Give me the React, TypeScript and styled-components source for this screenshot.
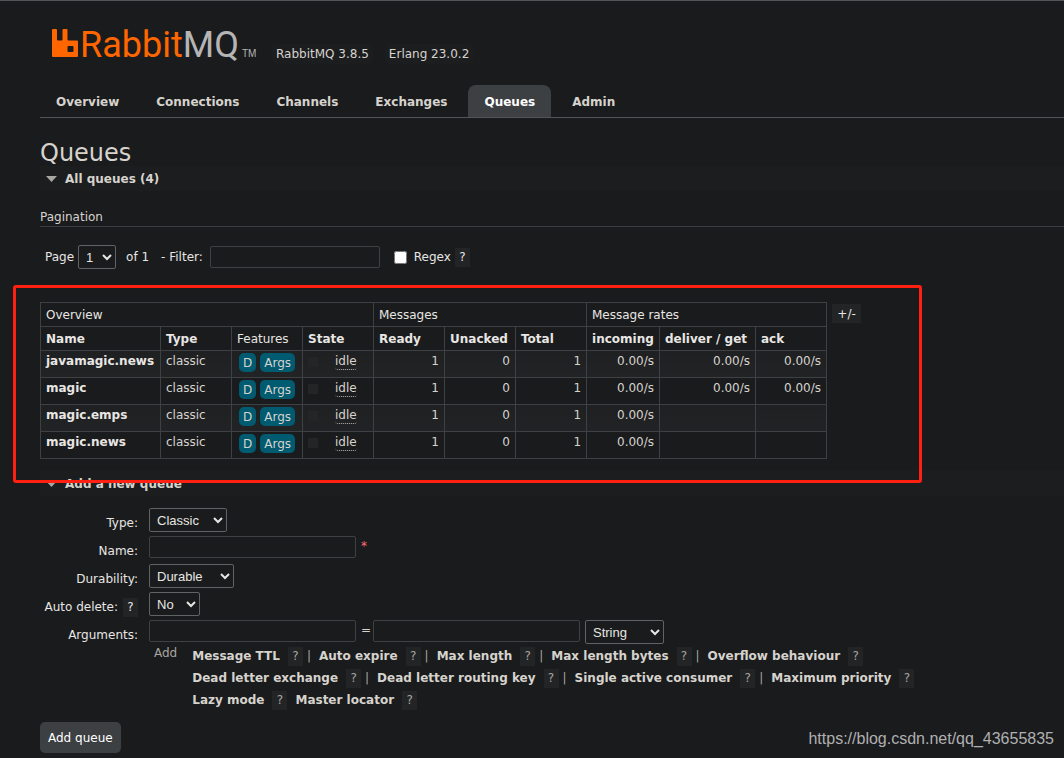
import React from "react";
import styled, { createGlobalStyle } from "styled-components";

const Global = createGlobalStyle`
  * { box-sizing: border-box; }
  body {
    margin: 0;
    background: #1a1b1d;
    color: #d6d3cd;
    font-family: "DejaVu Sans", Verdana, sans-serif;
    font-size: 12px;
    line-height: 16px;
  }
  a { color: inherit; text-decoration: none; }
`;

const Page = styled.div`
  position: relative;
  min-height: 100vh;
  padding: 26px 0 5px 40px;
  border-top: 1px solid #515558;
`;

const Header = styled.header`
  display: flex;
  align-items: center;
  height: 44px;
  gap: 12px;
`;

const Logo = styled.svg`
  display: block;
  width: 220px;
  height: 44px;
  overflow: visible;
`;

const Versions = styled.ul`
  display: flex;
  gap: 12px;
  margin: 10px 0 0;
  padding: 0;
  list-style: none;
`;

const Version = styled.li`
  padding: 2px 4px;
  border-radius: 4px;
  background: #1c1d1f;
`;

const Tabs = styled.nav`
  display: flex;
  gap: 5px;
  margin-top: 14px;
  border-bottom: 1px solid #515558;
`;

const Tab = styled.a<{ $active?: boolean }>`
  padding: 9px 16px 7px;
  border-radius: 8px 8px 0 0;
  font-weight: bold;
  background: ${(p) => (p.$active ? "#3c4043" : "transparent")};
  && { color: ${(p) => (p.$active ? "#ffffff" : "#d6d3cd")}; }
`;

const Title = styled.h1`
  margin: 22px 0 0;
  font-size: 24px;
  font-weight: normal;
  line-height: 26px;
`;

const SectionTitle = styled.h2`
  display: flex;
  align-items: center;
  gap: 8px;
  height: 25px;
  margin: 0;
  padding-left: 6px;
  background: #1c1d1f;
  font-size: 12px;
  font-weight: bold;
`;

const Arrow = styled.svg`
  width: 11px;
  height: 6px;
  fill: #a8a7a4;
`;

const SubTitle = styled.h3`
  margin: 18px 0;
  padding-bottom: 1px;
  border-bottom: 1px solid #3a3d3f;
  font-size: 12px;
  font-weight: normal;
`;

const FilterBar = styled.form`
  display: flex;
  align-items: center;
  gap: 4px;
  height: 24px;
  padding-left: 5px;
  color: #e8e6e3;
`;

const PageCount = styled.span`
  padding: 0 8px 0 6px;
`;

const FilterLabel = styled.label`
  padding-right: 3px;
`;

const RegexLabel = styled.label`
  display: flex;
  align-items: center;
  gap: 7px;
  margin-left: 10px;
`;

const Check = styled.input`
  width: 13px;
  height: 13px;
  margin: 0;
`;

const TextBox = styled.input<{ $width: number }>`
  width: ${(p) => p.$width}px;
  height: 22px;
  border: 1px solid #3d4144;
  border-radius: 2px;
  background: transparent;
  color: #e8e6e3;
  font: inherit;
`;

const Select = styled.select<{ $width: number }>`
  width: ${(p) => p.$width}px;
  height: 24px;
  padding: 0 3px;
  border: 1px solid #5f6366;
  border-radius: 2px;
  background: #1a1b1d;
  color: #e8e6e3;
  font-family: "Liberation Sans", Arial, sans-serif;
  font-size: 13px;
`;

const Help = styled.button`
  min-width: 15px;
  height: 19px;
  padding: 0 4px;
  border: 0;
  background: #222426;
  color: inherit;
  font: inherit;
`;

const TableRow = styled.div`
  display: flex;
  align-items: flex-start;
  gap: 5px;
  margin: 33px 0 12px;
`;

const ColumnToggle = styled(Help)`
  min-width: 29px;
  margin-top: 2px;
  color: #e8e6e3;
`;

const QueueTable = styled.table`
  width: 787px;
  table-layout: fixed;
  border-collapse: collapse;
`;

const Head = styled.th<{ $plain?: boolean }>`
  height: 24px;
  padding: 0 5px;
  border: 1px solid #3d4144;
  color: #e8e6e3;
  font-weight: ${(p) => (p.$plain ? "normal" : "bold")};
  text-align: left;
  white-space: nowrap;
`;

const Row = styled.tr`
  background: #1a1b1d;
  &:nth-child(odd) { background: linear-gradient(#1f2022, #222325); }
`;

const Cell = styled.td<{ $number?: boolean }>`
  height: 27px;
  padding: 2px 5px 0;
  border: 1px solid #3d4144;
  text-align: ${(p) => (p.$number ? "right" : "left")};
  vertical-align: top;
  white-space: nowrap;
`;

const QueueLink = styled.a`
  font-weight: bold;
  && { color: #e8e6e3; }
`;

const Features = styled.div`
  display: flex;
  gap: 4px;
  padding-left: 2px;
`;

const Feature = styled.abbr`
  padding: 2px 4px 1px;
  border-radius: 5px;
  background: #005a70;
`;

const State = styled.div`
  display: flex;
  align-items: center;
  gap: 17px;
`;

const StateMark = styled.span`
  width: 10px;
  height: 10px;
  background: #242527;
`;

const StateText = styled.abbr`
  border-bottom: 1px dotted #b8b5b0;
  border-radius: 3px;
  text-decoration: none;
`;

const Highlight = styled.div`
  position: absolute;
  left: 13px;
  top: 284px;
  width: 909px;
  height: 198px;
  border: 3px solid #ff2012;
  border-radius: 3px;
  pointer-events: none;
`;

const QueueForm = styled.form`
  display: grid;
  grid-template-columns: 98px 1fr;
  column-gap: 11px;
  margin-top: 12px;
`;

const FieldLabel = styled.div`
  display: flex;
  justify-content: flex-end;
  align-items: center;
  gap: 5px;
  height: 28px;
  padding-top: 2px;
  color: #e8e6e3;
  white-space: nowrap;
`;

const Field = styled.div`
  display: flex;
  align-items: flex-start;
  gap: 5px;
  height: 28px;
`;

const Mark = styled.span<{ $required?: boolean }>`
  width: 7px;
  padding-top: 2px;
  color: ${(p) => (p.$required ? "#ff7070" : "inherit")};
`;

const Shortcuts = styled.div`
  display: flex;
  grid-column: 2;
  gap: 15px;
  margin-top: -3px;
  padding-left: 5px;
  color: #a8a5a0;
`;

const ShortcutRow = styled.div`
  display: flex;
  align-items: center;
  height: 22px;
  white-space: nowrap;
`;

const Shortcut = styled.span`
  display: flex;
  align-items: center;
  gap: 8px;
  margin-right: 8px;
`;

const ShortcutLink = styled.a`
  font-weight: bold;
  && { color: #d6d3cd; }
`;

const Divider = styled.span`
  margin-left: -4px;
`;

const Submit = styled.button`
  display: block;
  height: 31px;
  margin-top: 11px;
  padding: 0 8px;
  border: 0;
  border-radius: 5px;
  background: #3c4043;
  color: #ffffff;
  font: inherit;
`;

const Watermark = styled.div`
  position: absolute;
  right: 10px;
  bottom: 10px;
  color: #b0b0b1;
  font-family: "Liberation Sans", Arial, sans-serif;
  font-size: 16px;
  line-height: 18px;
`;

const tabs = ["Overview", "Connections", "Channels", "Exchanges", "Queues", "Admin"];
const columns = [120, 71, 71, 71, 71, 71, 71, 73, 96, 71];
const headings = ["Name", "Type", "Features", "State", "Ready", "Unacked", "Total", "incoming", "deliver / get", "ack"];
const queues = [
  { name: "javamagic.news", rates: ["0.00/s", "0.00/s", "0.00/s"] },
  { name: "magic", rates: ["0.00/s", "0.00/s", "0.00/s"] },
  { name: "magic.emps", rates: ["0.00/s", "", ""] },
  { name: "magic.news", rates: ["0.00/s", "", ""] },
];
const shortcuts = [
  ["Message TTL", "Auto expire", "Max length", "Max length bytes", "Overflow behaviour"],
  ["Dead letter exchange", "Dead letter routing key", "Single active consumer", "Maximum priority"],
  ["Lazy mode", "Master locator"],
];

const DownArrow = () => (
  <Arrow viewBox="0 0 22 12" aria-hidden="true">
    <path d="M0 0h22L11 12z" />
  </Arrow>
);

const HelpButton = () => <Help type="button">?</Help>;

export default function App() {
  return (
    <>
      <Global />
      <Page>
        <Header>
          <Logo viewBox="0 0 220 44" role="img" aria-label="RabbitMQ">
            <path
              fill="#ff6600"
              fillRule="evenodd"
              d="M13 2h3q1 0 1 1v9.500q0 1 1 1h3.500q1 0 1-1V3q0-1 1-1h3q1 0 1 1v9.500q0 1 1 1h8.500q1 0 1 1V29q0 1-1 1H13q-1 0-1-1V3q0-1 1-1zM28.500 19q-1 0-1 1v4q0 1 1 1h4q1 0 1-1v-4q0-1-1-1z"
            />
            <text x="40" y="30" fill="#ff6600" fontFamily="Roboto, sans-serif" fontSize="36">
              Rabbit<tspan fill="#b5b5b5">MQ</tspan>
            </text>
            <text x="202" y="30" fill="#b5b5b5" fontFamily="Liberation Sans, sans-serif" fontSize="10">TM</text>
          </Logo>
          <Versions>
            <Version>RabbitMQ 3.8.5</Version>
            <Version>Erlang 23.0.2</Version>
          </Versions>
        </Header>
        <Tabs>
          {tabs.map((t) => (
            <Tab key={t} href="#" $active={t === "Queues"}>{t}</Tab>
          ))}
        </Tabs>
        <main>
          <Title>Queues</Title>
          <SectionTitle><DownArrow />All queues (4)</SectionTitle>
          <SubTitle>Pagination</SubTitle>
          <FilterBar>
            <label htmlFor="page">Page</label>
            <Select id="page" $width={38}><option>1</option></Select>
            <PageCount>of 1</PageCount>
            <FilterLabel htmlFor="filter">- Filter:</FilterLabel>
            <TextBox id="filter" $width={170} />
            <RegexLabel><Check type="checkbox" />Regex</RegexLabel>
            <HelpButton />
          </FilterBar>
          <TableRow>
            <QueueTable>
              <colgroup>
                {columns.map((w, i) => <col key={i} width={w} />)}
              </colgroup>
              <thead>
                <tr>
                  <Head $plain colSpan={4}>Overview</Head>
                  <Head $plain colSpan={3}>Messages</Head>
                  <Head $plain colSpan={3}>Message rates</Head>
                </tr>
                <tr>
                  {headings.map((h) => <Head key={h} $plain={h === "Features"}>{h}</Head>)}
                </tr>
              </thead>
              <tbody>
                {queues.map((q) => (
                  <Row key={q.name}>
                    <Cell><QueueLink href="#">{q.name}</QueueLink></Cell>
                    <Cell>classic</Cell>
                    <Cell><Features><Feature>D</Feature><Feature>Args</Feature></Features></Cell>
                    <Cell><State><StateMark /><StateText>idle</StateText></State></Cell>
                    <Cell $number>1</Cell>
                    <Cell $number>0</Cell>
                    <Cell $number>1</Cell>
                    {q.rates.map((r, i) => <Cell key={i} $number>{r}</Cell>)}
                  </Row>
                ))}
              </tbody>
            </QueueTable>
            <ColumnToggle type="button">+/-</ColumnToggle>
          </TableRow>
          <SectionTitle><DownArrow />Add a new queue</SectionTitle>
          <QueueForm id="add-queue">
            <FieldLabel><label htmlFor="type">Type:</label></FieldLabel>
            <Field><Select id="type" $width={78}><option>Classic</option></Select></Field>
            <FieldLabel><label htmlFor="name">Name:</label></FieldLabel>
            <Field><TextBox id="name" $width={207} /><Mark $required>*</Mark></Field>
            <FieldLabel><label htmlFor="durability">Durability:</label></FieldLabel>
            <Field><Select id="durability" $width={85}><option>Durable</option></Select></Field>
            <FieldLabel><label htmlFor="auto-delete">Auto delete:</label><HelpButton /></FieldLabel>
            <Field><Select id="auto-delete" $width={51}><option>No</option></Select></Field>
            <FieldLabel><label htmlFor="argument">Arguments:</label></FieldLabel>
            <Field>
              <TextBox id="argument" $width={207} />
              <Mark>=</Mark>
              <TextBox aria-label="Argument value" $width={207} />
              <Select aria-label="Argument type" $width={79}><option>String</option></Select>
            </Field>
            <Shortcuts>
              <span>Add</span>
              <div>
                {shortcuts.map((row, r) => (
                  <ShortcutRow key={r}>
                    {row.map((s, i) => (
                      <Shortcut key={s}>
                        <ShortcutLink href="#">{s}</ShortcutLink>
                        <HelpButton />
                        {r < 2 && i < row.length - 1 && <Divider>|</Divider>}
                      </Shortcut>
                    ))}
                  </ShortcutRow>
                ))}
              </div>
            </Shortcuts>
          </QueueForm>
          <Submit type="submit" form="add-queue">Add queue</Submit>
        </main>
        <Highlight />
        <Watermark>https://blog.csdn.net/qq_43655835</Watermark>
      </Page>
    </>
  );
}
